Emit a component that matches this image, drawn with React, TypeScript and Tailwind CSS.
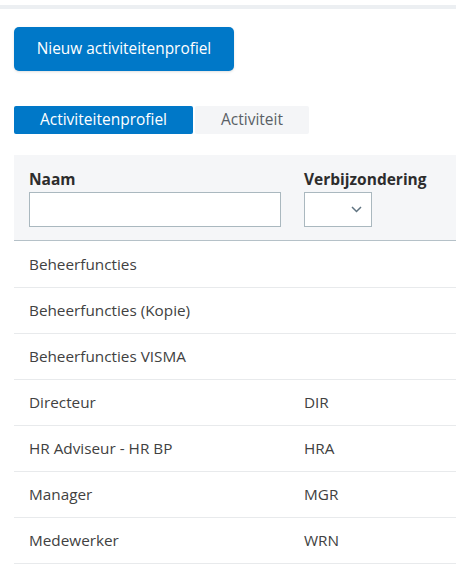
import React, { useState } from 'react';

const rows: { naam: string; code: string }[] = [
  { naam: 'Beheerfuncties', code: '' },
  { naam: 'Beheerfuncties (Kopie)', code: '' },
  { naam: 'Beheerfuncties VISMA', code: '' },
  { naam: 'Directeur', code: 'DIR' },
  { naam: 'HR Adviseur - HR BP', code: 'HRA' },
  { naam: 'Manager', code: 'MGR' },
  { naam: 'Medewerker', code: 'WRN' },
];

const App: React.FC = () => {
  const [tab, setTab] = useState<'profiel' | 'activiteit'>('profiel');
  const [naam, setNaam] = useState('');

  return (
    <div className="min-h-[568px] bg-white text-[#414141] font-['Open_Sans',sans-serif] text-[15.3px] overflow-hidden">
      {/* Top strip */}
      <div className="pt-[5px]">
        <div className="h-[4px] bg-[#eceff2]" />
      </div>

      <div className="pl-[14px]">
        <button className="mt-[18px] w-[220px] h-[44px] rounded-[5px] bg-[#0078c8] text-white text-[15.4px] shadow-sm">
          Nieuw activiteitenprofiel
        </button>

        {/* Tabs */}
        <div className="mt-[35px] flex gap-[2px] h-[28px]">
          <button
            onClick={() => setTab('profiel')}
            className={`w-[179px] rounded-[2px] text-[15.5px] ${
              tab === 'profiel' ? 'bg-[#0078c8] text-white' : 'bg-[#f4f5f7] text-[#5a5f66]'
            }`}
          >
            Activiteitenprofiel
          </button>
          <button
            onClick={() => setTab('activiteit')}
            className={`w-[114px] rounded-[2px] text-[15.5px] ${
              tab === 'activiteit' ? 'bg-[#0078c8] text-white' : 'bg-[#f4f5f7] text-[#5a5f66]'
            }`}
          >
            Activiteit
          </button>
        </div>

        {/* Table */}
        <div className="mt-[21px]">
          <div className="bg-[#f5f6f8] border-b border-[#b5c1c8] h-[86px] flex px-[15px] pt-[14px]">
            <div className="w-[275px]">
              <div className="font-bold text-[15.5px] leading-[20px] text-[#2d2d2d]">Naam</div>
              <input
                value={naam}
                onChange={(e) => setNaam(e.target.value)}
                className="mt-[3px] w-[252px] h-[35px] bg-white border border-[#aab8bf] outline-none px-2"
              />
            </div>
            <div>
              <div className="font-bold text-[15.5px] leading-[20px] text-[#2d2d2d]">Verbijzondering</div>
              <div className="mt-[3px] w-[68px] h-[35px] bg-white border border-[#aab8bf] flex items-center justify-end pr-[9px]">
                <svg width="11" height="7" viewBox="0 0 11 7" fill="none">
                  <path d="M1 1l4.5 4.5L10 1" stroke="#5f7380" strokeWidth="1.5" />
                </svg>
              </div>
            </div>
          </div>

          {rows.map((r, i) => (
            <div
              key={r.naam}
              className={`flex items-center border-b border-[#e8eaec] px-[15px] ${i === 0 ? 'h-[47px]' : 'h-[46px]'}`}
            >
              <div className="w-[275px]">{r.naam}</div>
              <div>{r.code}</div>
            </div>
          ))}
        </div>
      </div>
    </div>
  );
};

export default App;
